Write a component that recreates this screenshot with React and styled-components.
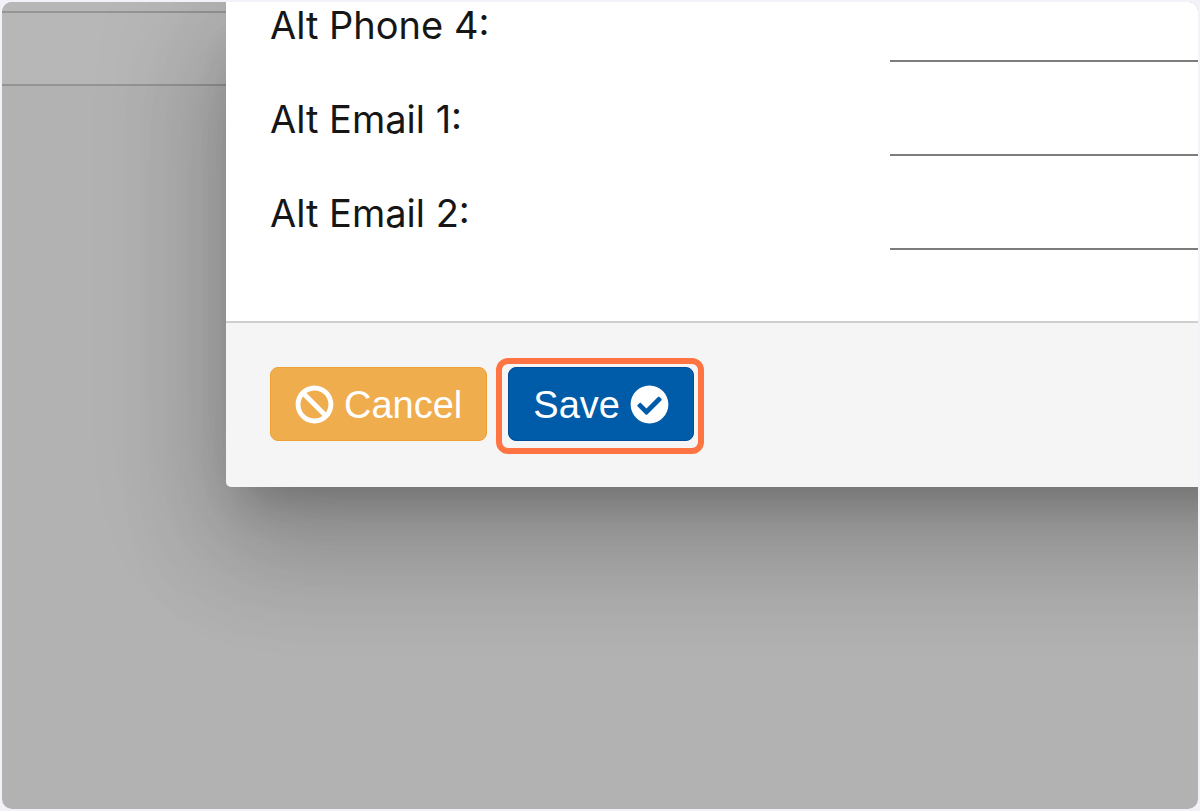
import React from "react";
import styled, { createGlobalStyle } from "styled-components";
import { FaBan, FaCheckCircle } from "react-icons/fa";

const GlobalStyle = createGlobalStyle`
  *, *::before, *::after { box-sizing: border-box; }
  body {
    margin: 0;
    background: #f2f2f8;
    color: #161616;
    font-family: Inter, "Liberation Sans", sans-serif;
  }
`;

const Page = styled.div`
  display: flex;
  min-height: 100vh;
  padding: 2px;
`;

const Frame = styled.main`
  flex: 1;
  display: grid;
  overflow: hidden;
  border-radius: 10px;
  background: #b2b2b2;
`;

const Backdrop = styled.div`
  grid-area: 1 / 1;
`;

const BackdropBar = styled.div`
  height: ${(p) => p.$height}px;
  border-bottom: 2px solid #949494;
  background: #b7b7b7;
`;

/* The dialog runs on past the right edge of the frame. */
const Dialog = styled.form`
  grid-area: 1 / 1;
  align-self: start;
  margin: 0 -400px 0 224px;
  border-radius: 0 0 0 5px;
  background: #f5f5f5;
  box-shadow:
    0 30px 41px -19px rgba(0, 0, 0, 0.2),
    0 66px 104px 8px rgba(0, 0, 0, 0.14),
    0 25px 126px 22px rgba(0, 0, 0, 0.12);
`;

const Fields = styled.div`
  margin-top: -34px;
  padding: 0 0 71px 44px;
  background: #fff;
`;

const Field = styled.div`
  display: grid;
  grid-template-columns: 620px 1fr;
  height: 94px;
`;

const Label = styled.label`
  align-self: end;
  padding-bottom: 13px;
  font-size: 38px;
  line-height: 48px;
`;

const TextInput = styled.input`
  width: 100%;
  min-width: 0;
  padding: 0;
  border: 0;
  border-bottom: 2px solid #7c7c7c;
  border-radius: 0;
  outline: 0;
  background: transparent;
  font: inherit;
  font-size: 38px;
`;

const Actions = styled.footer`
  display: flex;
  gap: 21px;
  padding: 44px 44px 46px;
  border-top: 2px solid #cfcfcf;
`;

const Button = styled.button`
  display: flex;
  align-items: center;
  gap: 10px;
  height: 74px;
  padding: 0 24px;
  border: 1px solid ${(p) => p.$edge};
  border-radius: 8px;
  background: ${(p) => p.$fill};
  color: #fff;
  font-family: "Liberation Sans", Arial, sans-serif;
  font-size: 38px;
  line-height: 44px;
  cursor: pointer;
`;

const Caption = styled.span`
  padding-top: 2px;
`;

const Highlight = styled.div`
  position: relative;

  &::after {
    content: "";
    position: absolute;
    inset: -9px -10px -13px -12px;
    border: 6px solid #ff7442;
    border-radius: 12px;
    pointer-events: none;
  }
`;

const fields = [
  { id: "alt-phone-4", label: "Alt Phone 4:", type: "tel" },
  { id: "alt-email-1", label: "Alt Email 1:", type: "email" },
  { id: "alt-email-2", label: "Alt Email 2:", type: "email" },
];

export default function App() {
  return (
    <>
      <GlobalStyle />
      <Page>
        <Frame>
          <Backdrop>
            <BackdropBar $height={11} />
            <BackdropBar $height={73} />
          </Backdrop>
          <Dialog onSubmit={(e) => e.preventDefault()}>
            <Fields>
              {fields.map((f) => (
                <Field key={f.id}>
                  <Label htmlFor={f.id}>{f.label}</Label>
                  <TextInput id={f.id} type={f.type} />
                </Field>
              ))}
            </Fields>
            <Actions>
              <Button type="button" $fill="#f0ad4e" $edge="#eea236">
                <FaBan size={39} aria-hidden="true" />
                <Caption>Cancel</Caption>
              </Button>
              <Highlight>
                <Button type="submit" $fill="#005ba9" $edge="#004c9a">
                  <Caption>Save</Caption>
                  <FaCheckCircle size={39} aria-hidden="true" />
                </Button>
              </Highlight>
            </Actions>
          </Dialog>
        </Frame>
      </Page>
    </>
  );
}
